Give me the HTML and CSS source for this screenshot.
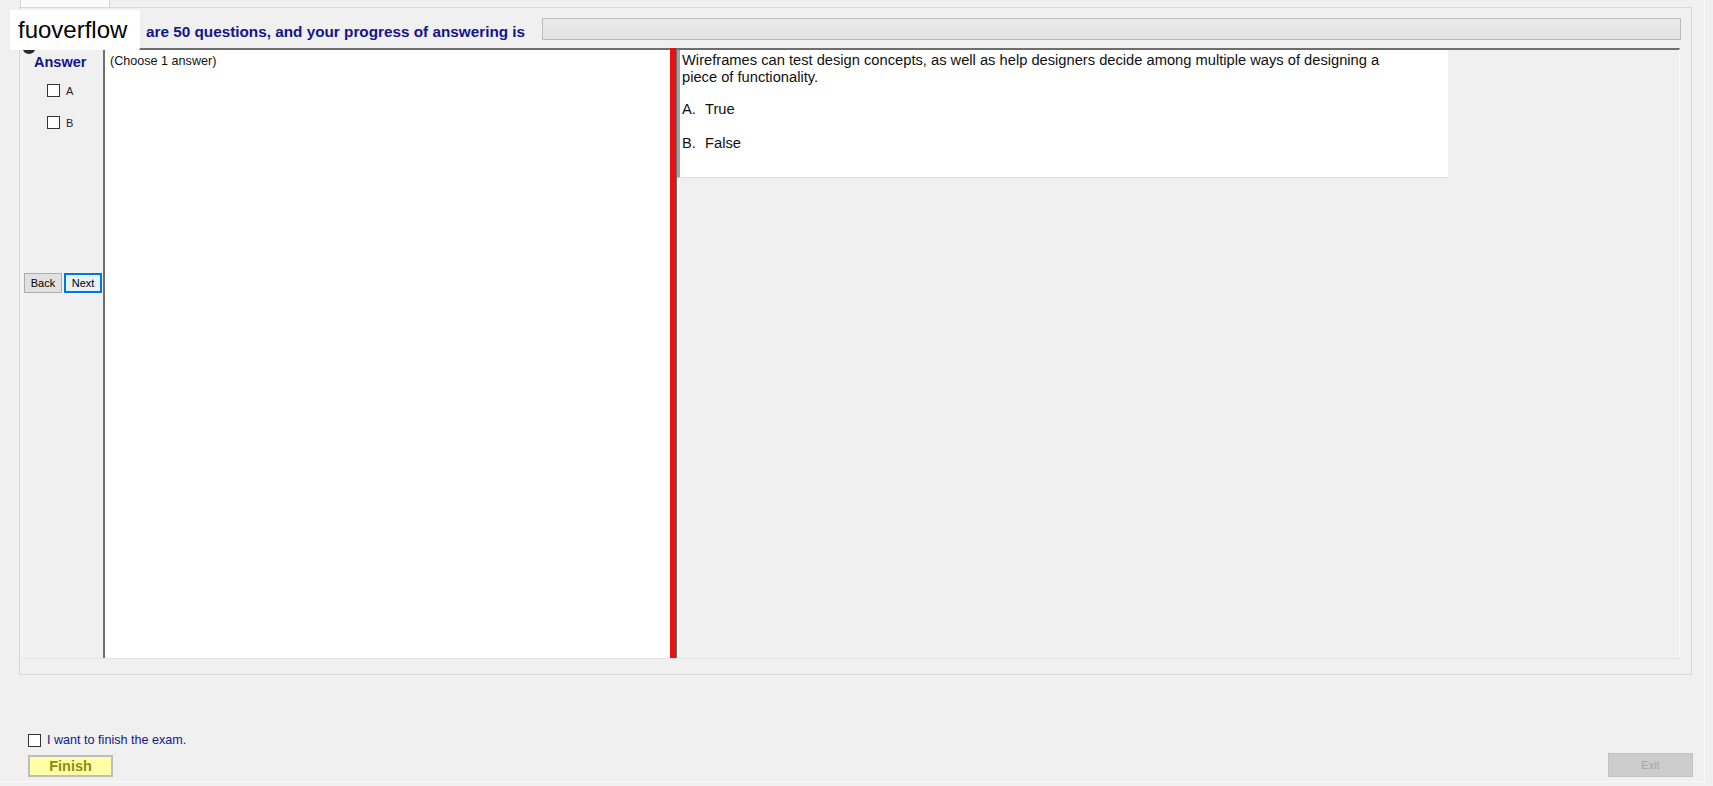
FILE: index.html
```html
<!DOCTYPE html>
<html lang="en">

<head>
    <meta charset="UTF-8">
    <meta name="viewport" content="width=device-width, initial-scale=1.0">
    <title>Exam</title>
    <link rel="stylesheet" href="styles.css">
</head>

<body>
    <div class="app">
        <div class="tabstrip">
            <div class="tab"></div>
        </div>

        <div class="tab-page">
            <div class="header">
                <span class="progress-text">are 50 questions, and your progress of answering is</span>
                <div class="progress-bar"></div>
            </div>

            <div class="main">
                <div class="answer-col">
                    <div class="answer-title">Answer</div>
                    <label class="option option-a">
                        <span class="check"></span>
                        <span class="option-label">A</span>
                    </label>
                    <label class="option option-b">
                        <span class="check"></span>
                        <span class="option-label">B</span>
                    </label>
                    <div class="nav-buttons">
                        <button type="button" class="nav-btn">Back</button>
                        <button type="button" class="nav-btn nav-btn-focus">Next</button>
                    </div>
                </div>

                <div class="stem-panel">(Choose 1 answer)</div>

                <div class="splitter"></div>

                <div class="question-area">
                    <div class="question-box">
                        <p class="question-text">Wireframes can test design concepts, as well as help designers decide among multiple ways of designing a piece of functionality.</p>
                        <p class="question-choice choice-a"><span class="choice-key">A.</span>True</p>
                        <p class="question-choice choice-b"><span class="choice-key">B.</span>False</p>
                    </div>
                </div>
            </div>
        </div>

        <div class="footer">
            <div class="finish-group">
                <label class="finish-check">
                    <span class="check"></span>
                    <span>I want to finish the exam.</span>
                </label>
                <button type="button" class="finish-btn">Finish</button>
            </div>
            <button type="button" class="exit-btn" disabled>Exit</button>
        </div>

        <!-- site label laid over the header -->
        <div class="badge-dot"></div>
        <div class="site-badge">fuoverflow</div>
    </div>
</body>

</html>
```

FILE: styles.css
```css
body {
    margin: 0;
    font-family: "Liberation Sans", Arial, sans-serif;
    background-color: #f0f0f0;
    color: #000;
}

.app {
    position: relative;
    width: 1704px;
    height: 781px;
    border-right: 1px solid #fafafa;
    border-bottom: 1px solid #fafafa;
}

/* tab strip, only the lower edge of the tab is visible */
.tabstrip {
    height: 7px;
    padding-left: 20px;
}

.tab {
    width: 88px;
    height: 7px;
    background-color: #fbfbfb;
    border-left: 1px solid #d6d6d6;
    border-right: 1px solid #d6d6d6;
}

.tab-page {
    margin-left: 19px;
    width: 1671px;
    height: 666px;
    border: 1px solid #d9d9d9;
    background-color: #f0f0f0;
}

.header {
    display: flex;
    align-items: center;
    height: 40px;
    padding-top: 2px;
    padding-left: 126px;
    padding-right: 10px;
    box-sizing: border-box;
}

.progress-text {
    width: 379px;
    font-size: 15.3px;
    font-weight: bold;
    color: #15158a;
    padding-top: 5px;
    white-space: nowrap;
}

.progress-bar {
    flex: 1;
    height: 22px;
    margin-left: 17px;
    box-sizing: border-box;
    border: 1px solid #bcbcbc;
    background: linear-gradient(#ededed, #e6e6e6 40%, #e2e2e2);
}

.main {
    display: flex;
    height: 610px;
    margin-left: 2px;
    margin-right: 11px;
    border-bottom: 1px solid #e4e4e4;
}

/* left column with the answer boxes */
.answer-col {
    display: flex;
    flex-direction: column;
    width: 81px;
    border-left: 1px solid #fafafa;
    box-sizing: border-box;
}

.answer-title {
    padding-top: 6px;
    padding-left: 11px;
    font-size: 14.5px;
    line-height: 16px;
    font-weight: bold;
    color: #15158a;
}

.option {
    display: flex;
    align-items: center;
    padding-left: 24px;
    height: 13px;
    cursor: pointer;
}

.option-a {
    margin-top: 14px;
}

.option-b {
    margin-top: 19px;
}

.check {
    display: inline-block;
    width: 11px;
    height: 11px;
    border: 1px solid #333;
    background-color: #fff;
    flex-shrink: 0;
}

.option-label {
    margin-left: 6px;
    font-size: 11px;
    color: #222;
}

.nav-buttons {
    display: flex;
    gap: 2px;
    margin-top: 144px;
    margin-left: 1px;
}

.nav-btn {
    width: 38px;
    height: 20px;
    padding: 0;
    font-family: "Liberation Sans", Arial, sans-serif;
    font-size: 11px;
    color: #000;
    background-color: #e1e1e1;
    border: 1px solid #adadad;
}

.nav-btn-focus {
    border: 2px solid #0078d7;
    background-color: #e5f1fb;
}

.stem-panel {
    width: 567px;
    box-sizing: border-box;
    padding: 4px 0 0 5px;
    background-color: #fff;
    border-left: 2px solid #6e6e6e;
    border-top: 2px solid #6e6e6e;
    font-size: 12.6px;
    line-height: 14px;
    color: #111;
}

.splitter {
    width: 7px;
    box-sizing: border-box;
    background-color: #e01414;
    border-right: 1px solid #6a6a6a;
}

.question-area {
    flex: 1;
    border-top: 2px solid #6e6e6e;
    border-right: 1px solid #fafafa;
    background-color: #f0f0f0;
}

.question-box {
    width: 771px;
    height: 128px;
    box-sizing: border-box;
    padding: 2px 0 0 2px;
    background-color: #fff;
    border-left: 3px solid #a4a4a4;
    border-bottom: 1px solid #e2e2e2;
    font-size: 14.7px;
    line-height: 17px;
    color: #111;
}

.question-box p {
    margin: 0;
}

.question-text {
    width: 720px;
}

.question-box .choice-a {
    margin-top: 15px;
}

.question-box .choice-b {
    margin-top: 17px;
}

.choice-key {
    display: inline-block;
    width: 23px;
}

.footer {
    display: flex;
    justify-content: space-between;
    align-items: flex-end;
    height: 106px;
    padding: 0 11px 4px 28px;
    box-sizing: border-box;
}

.finish-group {
    display: flex;
    flex-direction: column;
    align-items: flex-start;
}

.finish-check {
    display: flex;
    align-items: center;
    gap: 6px;
    font-size: 12.6px;
    color: #15158a;
    cursor: pointer;
}

.finish-btn {
    width: 85px;
    height: 22px;
    margin-top: 8px;
    padding: 0;
    font-family: "Liberation Sans", Arial, sans-serif;
    font-size: 14.5px;
    font-weight: bold;
    color: #8c8c10;
    background-color: #ffffa8;
    border: 2px solid #bdbdbd;
}

.exit-btn {
    width: 85px;
    height: 24px;
    padding: 0;
    font-family: "Liberation Sans", Arial, sans-serif;
    font-size: 11px;
    color: #a6a6a6;
    background-color: #cccccc;
    border: 1px solid #c2c2c2;
}

.site-badge {
    position: absolute;
    top: 10px;
    left: 10px;
    width: 122px;
    height: 40px;
    padding-left: 8px;
    background-color: #fff;
    border-radius: 2px;
    font-size: 24px;
    line-height: 40px;
    color: #000;
}

.badge-dot {
    position: absolute;
    top: 44px;
    left: 23px;
    width: 12px;
    height: 10px;
    border-radius: 50%;
    background-color: #2a2a2a;
}
```
